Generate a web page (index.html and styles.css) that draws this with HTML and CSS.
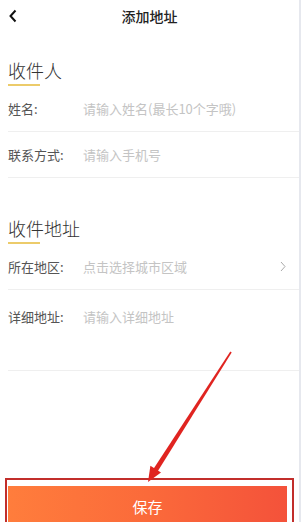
FILE: index.html
```html
<!DOCTYPE html>
<html lang="zh-CN">
<head>
  <meta charset="UTF-8">
  <title>添加地址</title>
  <link rel="stylesheet" href="styles.css">
</head>
<body>

  <div class="page">
    <header class="nav">
      <svg class="back" width="10" height="14" viewBox="0 0 10 14">
        <path d="M7.5 1.5 L2.5 7 L7.5 12.5" fill="none" stroke="#111" stroke-width="2"/>
      </svg>
      <h1>添加地址</h1>
    </header>

    <section class="group">
      <h2 class="group-title">收件人</h2>
      <div class="row">
        <span class="label">姓名:</span>
        <span class="placeholder">请输入姓名(最长10个字哦)</span>
      </div>
      <div class="row">
        <span class="label">联系方式:</span>
        <span class="placeholder">请输入手机号</span>
      </div>
    </section>

    <section class="group second">
      <h2 class="group-title">收件地址</h2>
      <div class="row">
        <span class="label">所在地区:</span>
        <span class="placeholder">点击选择城市区域</span>
        <svg class="more" width="6" height="11" viewBox="0 0 6 11">
          <path d="M1 1 L5 5.5 L1 10" fill="none" stroke="#aaa" stroke-width="1"/>
        </svg>
      </div>
      <div class="row tall">
        <span class="label">详细地址:</span>
        <span class="placeholder">请输入详细地址</span>
      </div>
    </section>

    <div class="mark-box">
      <div class="save-bar">
        <button class="save-btn">保存</button>
      </div>
    </div>

    <!-- red annotation arrow drawn over the screenshot -->
    <svg class="arrow" width="299" height="522" viewBox="0 0 299 522">
      <polygon points="231.7,352.5 230.3,351.6 153.4,468.9 157.6,471.6" fill="#e02420"/>
      <polygon points="148,482 150.4,465.8 161,472.6" fill="#e02420"/>
    </svg>
  </div>

</body>
</html>
```

FILE: styles.css
```css
* {
  margin: 0;
  padding: 0;
  box-sizing: border-box;
}

body {
  font-family: "Noto Sans CJK SC", "Noto Sans", sans-serif;
  background: #fff;
  color: #333;
}

.page {
  position: relative;
  width: 301px;
  height: 522px;
  overflow: hidden;
  border-right: 2px solid #e6e8ee;
  background: #fff;
}

.nav {
  position: relative;
  height: 32px;
  display: flex;
  align-items: center;
  justify-content: center;
}

.back {
  position: absolute;
  left: 8px;
  top: 9px;
}

.nav h1 {
  font-size: 14px;
  font-weight: 500;
  color: #222;
  line-height: 20px;
}

.group {
  padding-left: 8px;
  padding-top: 26px;
}

.group.second {
  padding-top: 38px;
}

.group-title {
  font-size: 18px;
  font-weight: 300;
  line-height: 24px;
  color: #333;
}

.group-title::after {
  content: "";
  display: block;
  width: 32px;
  height: 2px;
  margin-top: 2px;
  background: #eccb6a;
}

.row {
  height: 46px;
  display: flex;
  align-items: center;
  border-bottom: 1px solid #efefef;
  font-size: 13px;
  line-height: 20px;
}

.row.tall {
  height: 81px;
  align-items: flex-start;
  padding-top: 17px;
}

.label {
  width: 75px;
  color: #555;
}

.placeholder {
  flex: 1;
  color: #c4c4c4;
}

.more {
  margin-right: 13px;
}

.mark-box {
  margin: 107px 5px 0;
  border: 2px solid #c22e2b;
  padding-top: 6px;
}

.save-bar {
  display: flex;
  padding-right: 5px;
}

.save-btn {
  flex: 1;
  height: 42px;
  border: none;
  margin-left: 1px;
  background: linear-gradient(90deg, #ff7d3c, #fb6a3a 50%, #f4523a);
  color: #fff;
  font-family: inherit;
  font-size: 15px;
  line-height: 42px;
}

.arrow {
  position: absolute;
  left: 0;
  top: 0;
  pointer-events: none;
}
```
